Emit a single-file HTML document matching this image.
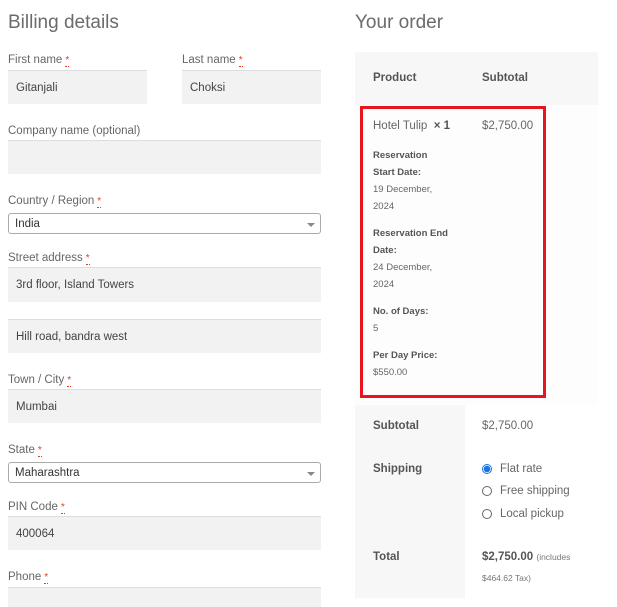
<!DOCTYPE html>
<html><head><style>
*{margin:0;padding:0;box-sizing:border-box}
body{width:617px;height:598px;position:relative;background:#fff;font-family:"Liberation Sans",sans-serif;color:#555;overflow:hidden}
.a{position:absolute;white-space:nowrap}
h2{position:absolute;font-weight:300;font-size:19px;color:#6b6b6b}
.l{position:absolute;font-size:11.5px;color:#666}
.l i{font-style:normal;color:#e2401c;border-bottom:1px dotted #e2401c;margin-left:3px;font-size:10px}
.in{position:absolute;background:#f2f2f2;border-top:1px solid #ddd;font-size:11.5px;color:#444;padding-left:8px;display:flex;align-items:center}
.sel{position:absolute;border:1px solid #aaa;border-radius:3px;font-size:11.5px;color:#333;padding-left:6px;display:flex;align-items:center;background:#fff}
.sel:after{content:"";position:absolute;right:5px;top:9px;border:4px solid transparent;border-top:4px solid #888}
.b{font-weight:bold;font-size:9.5px;color:#555}
.s{font-size:9.5px;color:#666}
.t{font-size:11.5px;color:#666}
.r{position:absolute;width:10px;height:10px;border:1px solid #666;border-radius:50%}
</style></head><body>
<h2 style="left:8px;top:12px">Billing details</h2>
<h2 style="left:355px;top:12px">Your order</h2>

<div class="l" style="left:8px;top:54px">First name<i>*</i></div>
<div class="in" style="left:8px;top:70px;width:139px;height:34px">Gitanjali</div>
<div class="l" style="left:182px;top:54px">Last name<i>*</i></div>
<div class="in" style="left:182px;top:70px;width:139px;height:34px">Choksi</div>
<div class="l" style="left:8px;top:125px">Company name (optional)</div>
<div class="in" style="left:8px;top:140px;width:313px;height:34px"></div>
<div class="l" style="left:8px;top:195px">Country / Region<i>*</i></div>
<div class="sel" style="left:8px;top:213px;width:313px;height:21px">India</div>
<div class="l" style="left:8px;top:252px">Street address<i>*</i></div>
<div class="in" style="left:8px;top:267px;width:313px;height:35px">3rd floor, Island Towers</div>
<div class="in" style="left:8px;top:319px;width:313px;height:34px">Hill road, bandra west</div>
<div class="l" style="left:8px;top:374px">Town / City<i>*</i></div>
<div class="in" style="left:8px;top:389px;width:313px;height:34px">Mumbai</div>
<div class="l" style="left:8px;top:444px">State<i>*</i></div>
<div class="sel" style="left:8px;top:462px;width:313px;height:21px">Maharashtra</div>
<div class="l" style="left:8px;top:501px">PIN Code<i>*</i></div>
<div class="in" style="left:8px;top:516px;width:313px;height:34px">400064</div>
<div class="l" style="left:8px;top:571px">Phone<i>*</i></div>
<div class="in" style="left:8px;top:587px;width:313px;height:20px"></div>

<div class="a" style="left:355px;top:52px;width:243px;height:53px;background:#f7f7f7"></div>
<div class="a b" style="left:373px;top:72px;font-size:11.5px">Product</div>
<div class="a b" style="left:482px;top:72px;font-size:11.5px">Subtotal</div>
<div class="a" style="left:355px;top:105px;width:243px;height:300px;background:#fdfdfd"></div>
<div class="a" style="left:360px;top:106px;width:186px;height:292px;border:3px solid #e8141e"></div>
<div class="a t" style="left:373px;top:120px">Hotel Tulip&nbsp; <b style="color:#555">× 1</b></div>
<div class="a t" style="left:482px;top:120px">$2,750.00</div>
<div class="a" style="left:373px;top:147px;line-height:17px">
<div class="b">Reservation<br>Start Date:</div>
<div class="s">19 December,<br>2024</div>
<div class="b" style="margin-top:10px">Reservation End<br>Date:</div>
<div class="s">24 December,<br>2024</div>
<div class="b" style="margin-top:10px">No. of Days:</div>
<div class="s">5</div>
<div class="b" style="margin-top:10px">Per Day Price:</div>
<div class="s">$550.00</div>
</div>

<div class="a" style="left:355px;top:405px;width:110px;height:193px;background:#f7f7f7"></div>
<div class="a b" style="left:373px;top:420px;font-size:11.5px">Subtotal</div>
<div class="a t" style="left:482px;top:420px">$2,750.00</div>
<div class="a b" style="left:373px;top:463px;font-size:11.5px">Shipping</div>
<div class="r" style="left:482px;top:464px;border-color:#1a73e8;background:radial-gradient(circle,#1a73e8 0 3px,#fff 3.5px)"></div>
<div class="a t" style="left:500px;top:463px">Flat rate</div>
<div class="r" style="left:482px;top:486px"></div>
<div class="a t" style="left:500px;top:485px">Free shipping</div>
<div class="r" style="left:482px;top:509px"></div>
<div class="a t" style="left:500px;top:508px">Local pickup</div>
<div class="a b" style="left:373px;top:551px;font-size:11.5px">Total</div>
<div class="a" style="left:482px;top:551px;font-size:11.5px;font-weight:bold;color:#555">$2,750.00 <span style="font-weight:normal;font-size:8.5px;color:#777">(includes</span></div>
<div class="a" style="left:482px;top:573px;font-size:8.5px;color:#777">$464.62 Tax)</div>
</body></html>
